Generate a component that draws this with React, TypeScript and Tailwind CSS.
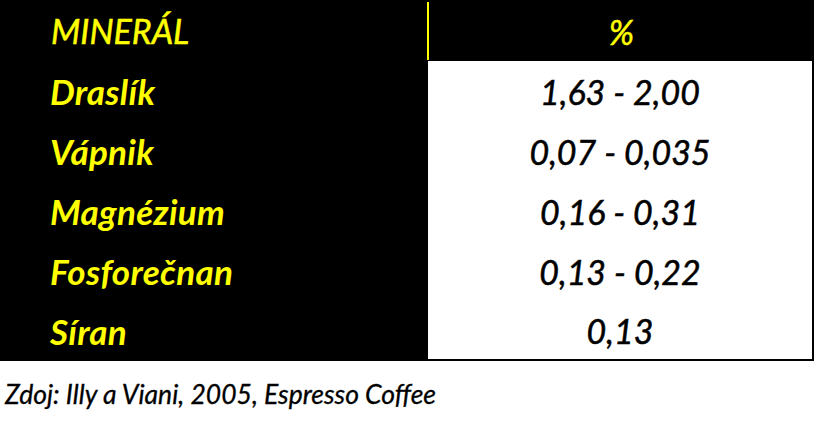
import React from "react";

const rows = [
  { name: "Draslík", value: "1,63 - 2,00" },
  { name: "Vápnik", value: "0,07 - 0,035" },
  { name: "Magnézium", value: "0,16 - 0,31" },
  { name: "Fosforečnan", value: "0,13 - 0,22" },
  { name: "Síran", value: "0,13" },
];

export default function App() {
  return (
    <div className="w-[816px] h-[424px] bg-white italic font-['Lato',sans-serif]">
      <div className="w-[814px]">
        {/* header */}
        <div className="flex h-[61px] bg-black text-[34px] text-[#ffff00] [-webkit-text-stroke:0.5px_currentColor]">
          <div className="w-[427px] pl-[51px] flex items-center">MINERÁL</div>
          <div className="flex-1 mt-[2px] mb-[1px] border-l-2 border-[#ffff00] flex items-center justify-center">%</div>
        </div>

        {rows.map((r, i) => (
          <div key={r.name} className="flex h-[60px]">
            <div className="w-[428px] bg-black pl-[50px] flex items-center text-[35px] font-bold text-[#ffff00] tracking-[0.3px]">
              {r.name}
            </div>
            <div
              className={
                i === rows.length - 1
                  ? "flex-1 bg-white border-r-2 border-b-2 border-black flex items-center justify-center text-[34px] text-black [-webkit-text-stroke:0.5px_currentColor]"
                  : "flex-1 bg-white border-r-2 border-black flex items-center justify-center text-[34px] text-black [-webkit-text-stroke:0.5px_currentColor]"
              }
            >
              {r.value}
            </div>
          </div>
        ))}
      </div>

      <p className="mt-[14px] pl-[5px] text-[26.5px] text-black [-webkit-text-stroke:0.3px_currentColor]">
        Zdoj: Illy a Viani, 2005, Espresso Coffee
      </p>
    </div>
  );
}
